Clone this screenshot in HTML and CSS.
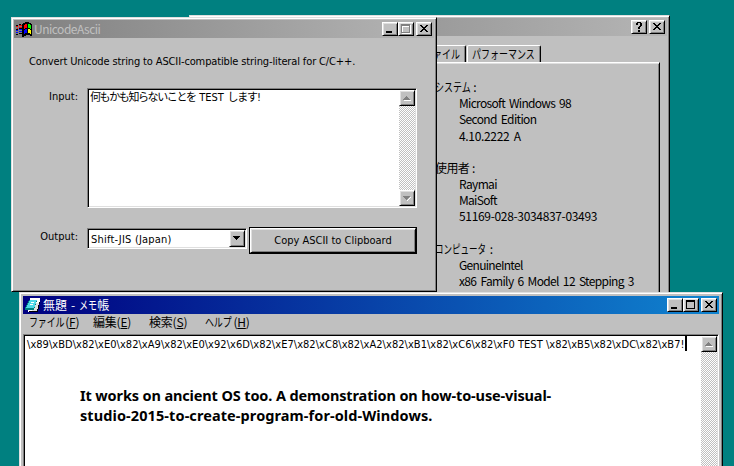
FILE: index.html
```
<!DOCTYPE html>
<html lang="ja">
<head>
<meta charset="utf-8">
<title>UnicodeAscii</title>
<link rel="stylesheet" href="styles.css">
</head>
<body>
<main class="desktop">

  <section class="window system">
    <header class="titlebar inactive">
      <div class="controls">
        <span class="btn ctl"><svg width="12" height="10" viewBox="0 0 12 10"><path d="M4 0h4v1H4zM3 1h2v2H3zM7 1h2v3H7zM6 4h2v1H6zM5 5h2v2H5zM5 8h2v2H5z"/></svg></span>
        <span class="btn ctl apart"><svg width="12" height="10" viewBox="0 0 12 10"><path d="M2 1h2v1H2zM8 1h2v1H8zM3 2h2v1H3zM7 2h2v1H7zM4 3h4v1H4zM5 4h2v1H5zM4 5h4v1H4zM3 6h2v1H3zM7 6h2v1H7zM2 7h2v1H2zM8 7h2v1H8z"/></svg></span>
      </div>
    </header>
    <nav class="tabs">
      <span class="tab first"><span class="kana">ファイル</span></span>
      <span class="tab second"><span class="kana">パフォーマンス</span></span>
    </nav>
    <div class="sheet">
      <dl class="info">
        <dt><span class="kana">システム</span> :</dt>
        <dd>Microsoft Windows 98</dd>
        <dd class="mid">Second Edition</dd>
        <dd class="num">4.10.2222 A</dd>
      </dl>
      <dl class="info">
        <dt><span class="kanji">使用者</span> :</dt>
        <dd class="mid">Raymai</dd>
        <dd>MaiSoft</dd>
        <dd class="num">51169-028-3034837-03493</dd>
      </dl>
      <dl class="info">
        <dt><span class="kana computer">コンピュータ</span> :</dt>
        <dd>GenuineIntel</dd>
        <dd class="mid">x86 Family 6 Model 12 Stepping 3</dd>
      </dl>
    </div>
  </section>

  <section class="window converter">
    <header class="titlebar inactive">
      <svg class="appicon" width="16" height="16" viewBox="0 0 16 16">
        <path d="M7 2h2v-1h4v1h2v1h1v12h-2v-1h-4v1H8v1H6V3h1z"/>
        <path fill="#f00" d="M8 4h1V3h2v4H9v1H8z"/><path fill="#0f0" d="M12 3h2v1h1v4h-1V7h-2z"/>
        <path fill="#00f" d="M8 9h1V8h2v4H9v1H8z"/><path fill="#ff0" d="M12 8h2v1h1v4h-1v-1h-2z"/>
        <path d="M0 4h2v1H0zM3 3h2v1H3zM0 8h2v1H0zM3 7h3v1H3zM0 13h2v1H0zM3 12h3v1H3z"/>
        <path fill="#f00" d="M0 5h2v1H0zM3 4h3v1H3zM1 7h1v1H1zM3 6h3v1H3z"/>
        <path fill="#00f" d="M0 9h2v1H0zM3 8h3v1H3zM0 11h2v1H0zM3 10h3v1H3z"/>
      </svg>
      <h1 class="title">UnicodeAscii</h1>
      <div class="controls">
        <span class="btn ctl"><svg width="12" height="10" viewBox="0 0 12 10"><path d="M2 7h6v2H2z"/></svg></span>
        <span class="btn ctl"><svg width="12" height="10" viewBox="0 0 12 10"><path fill="#fff" d="M2 1h9v9H2zM3 3v6h7V3z" fill-rule="evenodd"/><path fill="#808080" d="M1 0h9v9H1zM2 2v6h7V2z" fill-rule="evenodd"/></svg></span>
        <span class="btn ctl apart"><svg width="12" height="10" viewBox="0 0 12 10"><path d="M2 1h2v1H2zM8 1h2v1H8zM3 2h2v1H3zM7 2h2v1H7zM4 3h4v1H4zM5 4h2v1H5zM4 5h4v1H4zM3 6h2v1H3zM7 6h2v1H7zM2 7h2v1H2zM8 7h2v1H8z"/></svg></span>
      </div>
    </header>
    <div class="form">
      <p class="intro">Convert Unicode string to ASCII-compatible string-literal for C/C++.</p>
      <label class="label">Input:</label>
      <div class="field input">
        <div class="value"><span class="jp">何もかも知らないことを</span> TEST <span class="jp end">します</span>!</div>
        <div class="scroll">
          <span class="btn arrow"><svg width="12" height="12" viewBox="0 0 12 12"><path fill="#fff" d="M3 8h7v1H3z"/><path fill="#808080" d="M5 4h1v1H5zM4 5h3v1H4zM3 6h5v1H3zM2 7h7v1H2z"/></svg></span>
          <span class="btn arrow"><svg width="12" height="12" viewBox="0 0 12 12"><path fill="#fff" d="M9 5h1v1H9zM8 6h1v1H8zM7 7h1v1H7zM6 8h1v1H6z"/><path fill="#808080" d="M2 4h7v1H2zM3 5h5v1H3zM4 6h3v1H4zM5 7h1v1H5z"/></svg></span>
        </div>
      </div>
      <label class="label out">Output:</label>
      <div class="row">
        <div class="field combo">
          <div class="value">Shift-JIS (Japan)</div>
          <span class="btn drop"><svg width="12" height="12" viewBox="0 0 12 12"><path d="M2 4h7v1H2zM3 5h5v1H3zM4 6h3v1H4zM5 7h1v1H5z"/></svg></span>
        </div>
        <div class="default"><span class="btn copy">Copy ASCII to Clipboard</span></div>
      </div>
    </div>
  </section>

  <section class="window notepad">
    <header class="titlebar active">
      <svg class="appicon" width="16" height="16" viewBox="0 0 16 16">
        <path fill="#fff" d="M6 1h9v2l-3 12H3z"/>
        <path d="M15 3v2l-2 10H4v-1h8z"/>
        <path fill="#dfdfdf" d="M11 6h3l-2 8H7z"/>
        <path fill="#008080" d="M4 3h8v1l-3 9H0v-2z"/>
        <path fill="#4fd8e8" d="M5 3h7L9 11H1z"/>
        <path fill="#fff" d="M6 5h3v1H6zM5 7h3v1H5zM5 1h1v2H5zM8 1h1v2H8zM11 1h1v2h-1z"/>
      </svg>
      <h1 class="title">無題 - <span class="kana">メモ</span>帳</h1>
      <div class="controls">
        <span class="btn ctl"><svg width="12" height="10" viewBox="0 0 12 10"><path d="M2 7h6v2H2z"/></svg></span>
        <span class="btn ctl"><svg width="12" height="10" viewBox="0 0 12 10"><path d="M1 0h9v9H1zM2 2v6h7V2z" fill-rule="evenodd"/></svg></span>
        <span class="btn ctl apart"><svg width="12" height="10" viewBox="0 0 12 10"><path d="M2 1h2v1H2zM8 1h2v1H8zM3 2h2v1H3zM7 2h2v1H7zM4 3h4v1H4zM5 4h2v1H5zM4 5h4v1H4zM3 6h2v1H3zM7 6h2v1H7zM2 7h2v1H2zM8 7h2v1H8z"/></svg></span>
      </div>
    </header>
    <nav class="menu">
      <span class="item file"><span class="kana">ファイル</span>(<u>F</u>)</span>
      <span class="item edit">編集(<u>E</u>)</span>
      <span class="item find">検索(<u>S</u>)</span>
      <span class="item help"><span class="kana">ヘルプ</span>(<u>H</u>)</span>
    </nav>
    <div class="field editor">
      <div class="page">
        <p class="code">\x89\xBD\x82\xE0\x82\xA9\x82\xE0\x92\x6D\x82\xE7\x82\xC8\x82\xA2\x82\xB1\x82\xC6\x82\xF0 TEST \x82\xB5\x82\xDC\x82\xB7!</p>
        <p class="note">It works on ancient OS too. A demonstration on how-to-use-visual-<br><span class="second-line">studio-2015-to-create-program-for-old-Windows.</span></p>
      </div>
      <div class="scroll">
        <span class="btn arrow"><svg width="12" height="12" viewBox="0 0 12 12"><path fill="#fff" d="M3 8h7v1H3z"/><path fill="#808080" d="M5 4h1v1H5zM4 5h3v1H4zM3 6h5v1H3zM2 7h7v1H2z"/></svg></span>
      </div>
    </div>
  </section>

</main>
</body>
</html>
```
FILE: styles.css
```
* { box-sizing: border-box; }
body, p, h1, dl, dd { margin: 0; }
svg { display: block; shape-rendering: crispEdges; flex: none; }

.desktop {
  position: relative;
  width: 734px;
  height: 466px;
  overflow: hidden;
  background: #008080;
  color: #000;
  font: 11px/14px "DejaVu Sans Condensed", "Noto Sans CJK JP", sans-serif;
  white-space: nowrap;
}

.window {
  position: absolute;
  display: flex;
  flex-direction: column;
  background: #c0c0c0;
  border: 1px solid;
  border-color: #dfdfdf #000 #000 #dfdfdf;
  box-shadow: inset 1px 1px #fff, inset -1px -1px #808080;
  padding: 2px;
}
.system { left: 189px; top: 15px; width: 481px; height: 300px; }
.converter { left: 11px; top: 17px; width: 426px; height: 275px; }
.notepad { left: 19px; top: 292px; width: 704px; height: 190px; padding: 3px; }

.titlebar {
  display: flex;
  align-items: center;
  flex: none;
  height: 18px;
  padding: 0 2px;
}
.inactive { background: linear-gradient(90deg, #808080, #b5b5b5); color: #c0c0c0; }
.active { background: linear-gradient(90deg, #000080, #1084d0); color: #fff; }
.title {
  margin-left: 2px;
  font: 12px/16px "Noto Sans CJK JP", sans-serif;
  letter-spacing: -0.5px;
}
.active .title { letter-spacing: 0; word-spacing: 1.3px; }
.controls { display: flex; margin-left: auto; }

.btn {
  display: flex;
  background: #c0c0c0;
  border: 1px solid;
  border-color: #fff #000 #000 #fff;
  box-shadow: inset 1px 1px #dfdfdf, inset -1px -1px #808080;
}
.ctl { width: 16px; height: 14px; padding: 1px; }
.apart { margin-left: 2px; }
.arrow { width: 16px; height: 16px; padding: 1px; }

.kana { display: inline-block; transform: scaleX(0.75); transform-origin: left; }

/* System properties */
.tabs {
  display: flex;
  align-items: flex-end;
  height: 26px;
  padding-left: 227px;
  font: 12px/15px "Noto Sans CJK JP", sans-serif;
}
.tab {
  height: 17px;
  border: 1px solid;
  border-color: #fff #000 transparent #fff;
  border-bottom: 0;
  border-radius: 2px 2px 0 0;
  box-shadow: inset -1px 0 #808080;
}
.first { width: 47px; padding-left: 4px; }
.second { width: 74px; margin-left: 1px; padding-left: 4px; }
.sheet {
  flex: 1;
  width: 464px;
  margin-left: 4px;
  padding-top: 16px;
  border: 1px solid;
  border-color: #fff #000 #000 #fff;
  box-shadow: inset 0 1px #dfdfdf, inset -1px 0 #808080;
}
.info {
  padding-left: 238px;
  margin-bottom: 16px;
  font: 12px/16.2px "Noto Sans CJK JP", sans-serif;
  letter-spacing: -0.7px;
  word-spacing: 2px;
}
.info dt { letter-spacing: 0; word-spacing: 0; }
.info dt .kana { margin-right: -12px; }
.info dt .kana.computer { margin-right: -20px; transform: scaleX(0.71); }
.kanji { letter-spacing: -0.6px; }
.info dd { padding-left: 24px; }
.info .mid { letter-spacing: -0.65px; }
.info .num { letter-spacing: -0.33px; }

/* Converter dialog */
.form {
  display: grid;
  grid-template-columns: 64px 330px;
  column-gap: 9px;
}
.intro { grid-column: 1 / -1; padding: 17px 0 0 15px; height: 50px; letter-spacing: -0.13px; }
.label { text-align: right; padding-top: 2px; }
.out { padding-top: 22px; }
.field {
  display: flex;
  background: #fff;
  border: 1px solid;
  border-color: #808080 #fff #fff #808080;
  box-shadow: inset 1px 1px #000, inset -1px -1px #dfdfdf;
  padding: 1px;
}
.input { height: 120px; }
.value { flex: 1; }
.input .value { padding: 1px 0 0 1px; word-spacing: 0.5px; }
.jp { letter-spacing: -1.4px; }
.end { letter-spacing: -1.2px; }
.scroll {
  display: flex;
  flex-direction: column;
  justify-content: space-between;
  width: 16px;
  background: conic-gradient(#fff 25%, #c0c0c0 0 50%, #fff 0 75%, #c0c0c0 0) 0 0 / 2px 2px;
}
.row { display: flex; padding-top: 19px; align-items: flex-start; }
.combo { width: 160px; height: 21px; margin-top: 1px; }
.combo .value { padding: 3px 0 0 2px; letter-spacing: 0.2px; }
.drop { width: 16px; height: 17px; padding: 1px; }
.default { width: 168px; margin-left: 2px; border: 1px solid #000; }
.copy { height: 25px; justify-content: center; align-items: center; }

/* Notepad */
.menu {
  display: flex;
  height: 20px;
  padding-left: 6px;
  font: 12px/16px "Noto Sans CJK JP", sans-serif;
}
.item { letter-spacing: -0.2px; }
.item u { text-underline-offset: 1px; }
.file { width: 64px; }
.file .kana { margin-right: -11px; }
.edit, .find { width: 56px; }
.help .kana { margin-right: -7px; }
.title .kana { margin-right: -6px; }
.editor { flex: 1; }
.page { flex: 1; }
.code {
  width: 662px;
  padding: 2px 0 0 2px;
  height: 15px;
  letter-spacing: 0.04px;
  border-right: 2px solid #000;
}
.note {
  padding: 34px 0 0 55px;
  font: bold 14.5px/20px "Noto Sans", sans-serif;
  letter-spacing: -0.13px;
}
.second-line { letter-spacing: 0.09px; }
```
